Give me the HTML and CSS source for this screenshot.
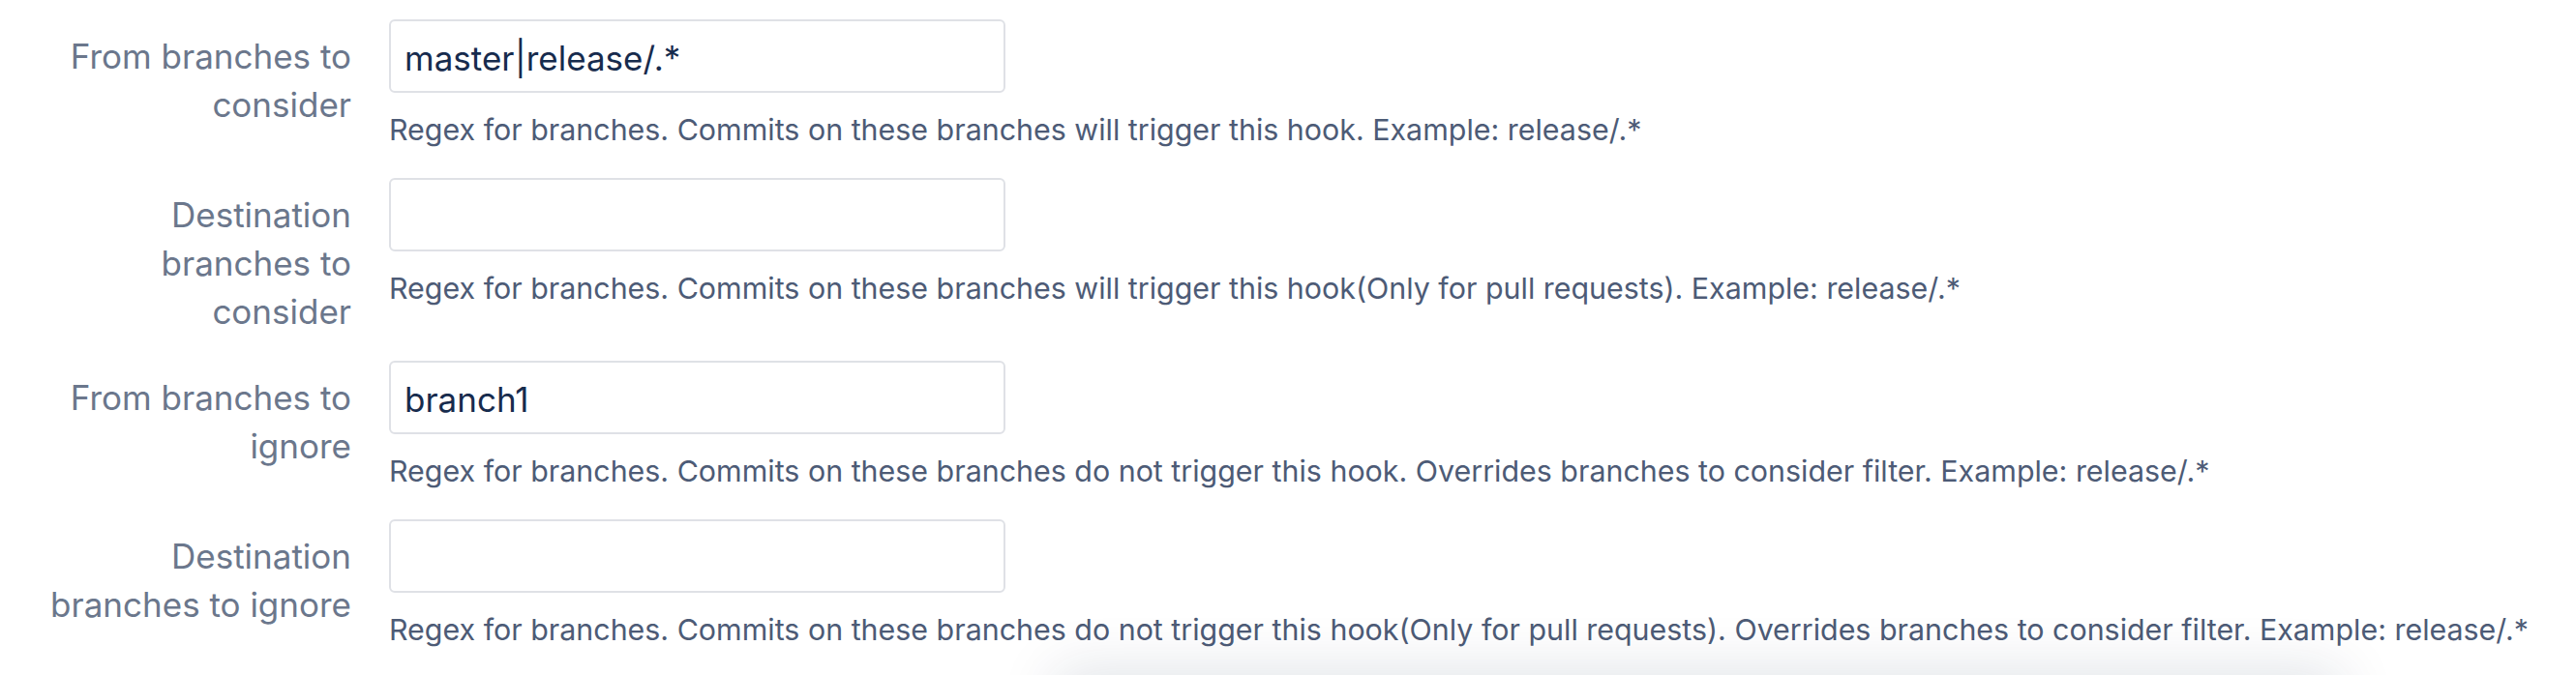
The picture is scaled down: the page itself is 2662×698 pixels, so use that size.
FILE: index.html
```html
<!DOCTYPE html>
<html lang="en">

<head>
    <meta charset="UTF-8">
    <meta name="viewport" content="width=device-width, initial-scale=1.0">
    <title>Hook branch filters</title>
    <link rel="stylesheet" href="styles.css">
</head>

<body>
    <form class="hook-form">
        <div class="field-row">
            <label class="field-label" for="from-consider">From branches to consider</label>
            <div class="field-body">
                <input class="text-input" type="text" id="from-consider" value="master|release/.*">
                <div class="field-help">Regex for branches. Commits on these branches will trigger this hook. Example: release/.*</div>
            </div>
        </div>
        <div class="field-row">
            <label class="field-label" for="dest-consider">Destination branches to consider</label>
            <div class="field-body">
                <input class="text-input" type="text" id="dest-consider" value="">
                <div class="field-help">Regex for branches. Commits on these branches will trigger this hook(Only for pull requests). Example: release/.*</div>
            </div>
        </div>
        <div class="field-row">
            <label class="field-label" for="from-ignore">From branches to ignore</label>
            <div class="field-body">
                <input class="text-input" type="text" id="from-ignore" value="branch1">
                <div class="field-help">Regex for branches. Commits on these branches do not trigger this hook. Overrides branches to consider filter. Example: release/.*</div>
            </div>
        </div>
        <div class="field-row">
            <label class="field-label" for="dest-ignore">Destination branches to ignore</label>
            <div class="field-body">
                <input class="text-input" type="text" id="dest-ignore" value="">
                <div class="field-help">Regex for branches. Commits on these branches do not trigger this hook(Only for pull requests). Overrides branches to consider filter. Example: release/.*</div>
            </div>
        </div>
    </form>

    <div class="dialog-footer"></div>
</body>

</html>
```

FILE: styles.css
```css
* {
    margin: 0;
    padding: 0;
    box-sizing: border-box;
}

body {
    font-family: Inter, "Liberation Sans", sans-serif;
    background: #fff;
    overflow: hidden;
}

.hook-form {
    display: flex;
    flex-direction: column;
    gap: 26px;
    padding: 20px 0 0 40px;
}

.field-row {
    display: flex;
    align-items: flex-start;
    gap: 39px;
}

.field-label {
    width: 323px;
    flex-shrink: 0;
    padding-top: 13px;
    text-align: right;
    font-size: 35px;
    line-height: 50px;
    color: #6b778c;
}

.field-body {
    display: flex;
    flex-direction: column;
    padding-bottom: 4px;
}

.text-input {
    width: 637px;
    height: 76px;
    padding: 4px 14px 0;
    border: 2px solid #dfe1e6;
    border-radius: 6px;
    background: #fff;
    font-family: Inter, "Liberation Sans", sans-serif;
    font-size: 35px;
    color: #172b4d;
    outline: none;
}

.field-help {
    margin-top: 18px;
    font-size: 30.4px;
    line-height: 40px;
    color: #4d5b76;
    white-space: nowrap;
}

/* floating panel just below the visible area, only its shadow shows */
.dialog-footer {
    position: fixed;
    left: 1100px;
    top: 702px;
    width: 1310px;
    height: 120px;
    background: #fff;
    box-shadow: 0 0 60px 10px rgba(9, 30, 66, 0.12);
}
```
